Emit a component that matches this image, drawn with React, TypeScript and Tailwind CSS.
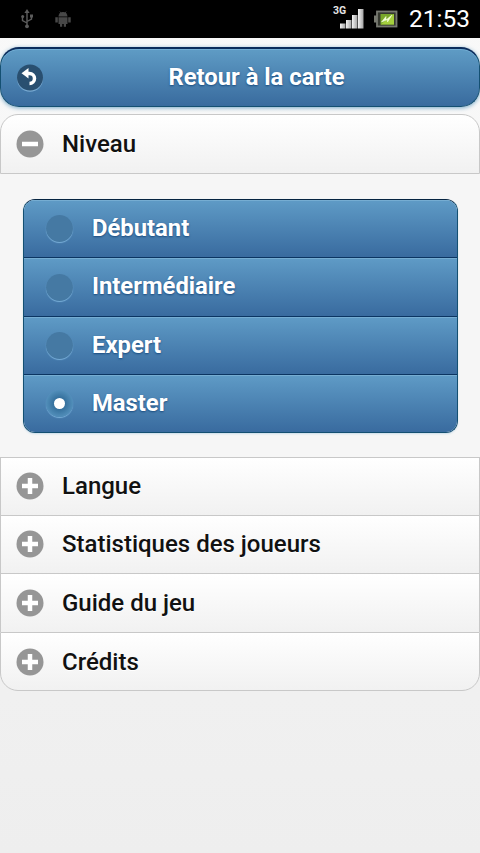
import React, { useState } from 'react'

const levels = ['Débutant', 'Intermédiaire', 'Expert', 'Master']
const sections = ['Langue', 'Statistiques des joueurs', 'Guide du jeu', 'Crédits']

const blueShadow = '[text-shadow:0_1px_2px_#194b7e]'

function StatusBar() {
  return (
    <div className="flex h-[38px] items-center bg-black text-white">
      {/* usb */}
      <svg className="ml-[21px]" width="12" height="20" viewBox="0 0 12 20" fill="none" stroke="#5c5c5c" strokeWidth="1.4">
        <path d="M6 3v14M1.5 8v3.5L6 14M10.500 7v3L6 12.500" />
        <path d="M6 0l2.600 4H3.400z" fill="#5c5c5c" stroke="none" />
        <circle cx="6" cy="17.300" r="1.900" fill="#5c5c5c" stroke="none" />
        <circle cx="1.700" cy="7.500" r="1.500" fill="#5c5c5c" stroke="none" />
        <path d="M9 5.500h3v3H9z" fill="#5c5c5c" stroke="none" />
      </svg>
      {/* android */}
      <svg className="ml-[22px]" width="16" height="16" viewBox="0 0 16 16" fill="#484848">
        <path d="M3.500 5.500a4.500 4.500 0 0 1 9 0z" />
        <path d="M3.500 6.300h9V13h-9zM.3 6.300h2.500v5.200H.3zM13.200 6.300h2.500v5.200h-2.500zM5 13h2.200v2.800H5zM8.800 13H11v2.800H8.800z" />
        <path d="M4.800.5l1.400 2M11.200.5l-1.400 2" stroke="#484848" strokeWidth=".8" />
      </svg>
      {/* signal, battery and clock */}
      <div className="ml-[262px] flex h-[26px] w-[32px] flex-col">
        <span className="h-[3px] text-[10.500px] font-bold leading-[9px] text-[#e4e4e4]">3G</span>
        <svg className="ml-[7px]" width="24" height="21" viewBox="0 0 24 21">
          <defs>
            <linearGradient id="bar" x1="0" x2="1" y1="0" y2="0">
              <stop offset="0" stopColor="#f4f4f4" />
              <stop offset="1" stopColor="#a4a4a4" />
            </linearGradient>
          </defs>
          <rect x="0" y="14.500" width="5.500" height="5" fill="url(#bar)" />
          <rect x="6" y="11" width="5.500" height="8.500" fill="url(#bar)" />
          <rect x="12" y="6" width="5.500" height="13.500" fill="url(#bar)" />
          <rect x="18" y="0" width="5.500" height="19.500" fill="url(#bar)" />
        </svg>
      </div>
      <svg className="ml-[8px]" width="25" height="18" viewBox="0 0 25 18">
        <path d="M1 5.500h3v7H1z" fill="#77796f" />
        <rect x="4" y="1.500" width="19.500" height="15" fill="#35382f" stroke="#777971" strokeWidth="1.800" />
        <rect x="7.500" y="4" width="13.500" height="10.500" fill="#78a829" />
        <path d="M7.500 14.500l13.500-10.500v10.500z" fill="#a4cf3d" />
        <path d="M8.500 12l4.500-5.500v3.500L19 5l-4.500 7V9.500z" fill="#f4ffd8" stroke="#f4ffd8" strokeWidth=".6" />
      </svg>
      <span className="ml-[11px] pt-px text-[24.500px] leading-none">21:53</span>
    </div>
  )
}

function SectionHeader({ title, open = false, className = '' }: { title: string; open?: boolean; className?: string }) {
  return (
    <button
      className={`flex w-full items-center border-[#c8c8c8] bg-gradient-to-b from-white to-[#f1f1f1] pl-[15px] text-left text-[24px] font-medium text-[#111] [text-shadow:0_1px_0_#fff] ${className}`}
    >
      <svg width="28" height="28" viewBox="0 0 28 28">
        <circle cx="14" cy="14" r="13.500" fill="#969696" />
        <path d={open ? 'M6 14h16' : 'M6 14h16M14 6v16'} stroke="#fff" strokeWidth="4.500" />
      </svg>
      <span className="ml-[18px]">{title}</span>
    </button>
  )
}

export default function App() {
  const [level, setLevel] = useState('Master')

  return (
    <div className="h-[853px] w-[480px] overflow-hidden bg-gradient-to-b from-[#f9f9f9] to-[#eeeeee] font-['Roboto',sans-serif]">
      <StatusBar />

      <button
        className={`mt-[9px] flex h-[60px] w-full items-center rounded-[19px] border border-[#145072] border-t-2 border-t-[#0b2c5c] bg-gradient-to-b from-[#5f9cc5] to-[#396b9e] pl-[15px] text-[23.800px] font-bold text-white shadow-[inset_0_1px_0_#75afd5,0_1px_4px_#77a9c8] ${blueShadow}`}
      >
        <svg width="28" height="28" viewBox="0 0 28 28">
          <circle cx="14" cy="14.700" r="13" fill="#78aad2" />
          <circle cx="14" cy="13.500" r="13" fill="#294f70" />
          <path d="M11 9.500h2.500a5 5 0 0 1 0 10" fill="none" stroke="#fff" strokeWidth="3.500" />
          <path d="M5.500 9.300l7-5.300v10.500z" fill="#fff" />
        </svg>
        <span className="flex-1 pr-[10px] pt-px text-center">Retour à la carte</span>
      </button>

      <div className="mt-[7px]">
        <SectionHeader title="Niveau" open className="h-[60px] rounded-t-[18px] border" />

        <div className="h-[283px] bg-[#f6f6f6] px-[23px] pt-[25px]">
          <div className="h-[234px] w-[435px] overflow-hidden rounded-[12px] border border-[#145072] border-t-[#062441] shadow-[0_1px_2px_#c9dce9]">
            {levels.map((name) => (
              <button
                key={name}
                onClick={() => setLevel(name)}
                className={`flex h-[58.400px] w-full items-center border-b border-[#0b3562] bg-gradient-to-b from-[#5f9bc6] to-[#396b9f] pl-[22px] text-[23.800px] font-bold text-white shadow-[inset_0_1px_0_#76add2] last:h-[57px] last:border-b-0 ${blueShadow}`}
              >
                <span className={`flex size-[27px] items-center justify-center rounded-full shadow-[0_1px_1px_#79afd9] ${level === name ? 'bg-[radial-gradient(circle,#326d9a_25%,#5592bd_75%)]' : 'bg-[#4579a3]'}`}>
                  {level === name && <span className="size-[11px] rounded-full bg-white" />}
                </span>
                <span className="ml-[19px]">{name}</span>
              </button>
            ))}
          </div>
        </div>

        <SectionHeader title={sections[0]} className="h-[58px] border-x border-t pb-px" />
        <SectionHeader title={sections[1]} className="h-[58px] border-x border-t pb-px" />
        <SectionHeader title={sections[2]} className="h-[59px] border-x border-t pb-px" />
        <SectionHeader title={sections[3]} className="h-[59px] rounded-b-[18px] border" />
      </div>
    </div>
  )
}
